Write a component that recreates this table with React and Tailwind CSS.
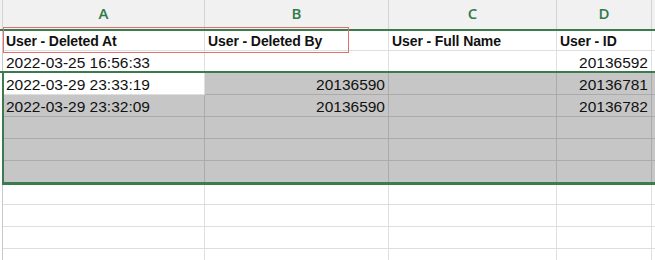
import React from "react";

const columns = [
  { key: "A", width: "w-[202px]", align: "left" },
  { key: "B", width: "w-[184px]", align: "right" },
  { key: "C", width: "w-[168px]", align: "left" },
  { key: "D", width: "w-[95px]", align: "right" },
];

const headers = ["User - Deleted At", "User - Deleted By", "User - Full Name", "User - ID"];

// each row: values for A..D, plus whether it sits inside the shaded range
const rows = [
  { cells: ["2022-03-25 16:56:33", "", "", "20136592"], shaded: false },
  { cells: ["2022-03-29 23:33:19", "20136590", "", "20136781"], shaded: true, activeFirst: true },
  { cells: ["2022-03-29 23:32:09", "20136590", "", "20136782"], shaded: true },
  { cells: ["", "", "", ""], shaded: true },
  { cells: ["", "", "", ""], shaded: true },
  { cells: ["", "", "", ""], shaded: true },
  { cells: ["", "", "", ""], shaded: false },
  { cells: ["", "", "", ""], shaded: false },
  { cells: ["", "", "", ""], shaded: false },
  { cells: ["", "", "", ""], shaded: false },
];

function Cell({ value, width, align, shaded, bold }) {
  return (
    <div
      className={`${width} shrink-0 h-full flex items-center px-[3px] border-r border-b ${
        shaded ? "bg-[#c6c6c6] border-[#ababab]" : "bg-white border-[#dedede]"
      } ${align === "right" ? "justify-end" : "justify-start"}`}
    >
      <span
        className={
          bold
            ? "text-[14px] font-bold tracking-[-0.1px] text-[#111] whitespace-nowrap pt-[4px]"
            : "text-[15.5px] text-[#111] whitespace-nowrap pt-[3px]"
        }
      >
        {value}
      </span>
    </div>
  );
}

function Row({ cells, shaded, activeFirst, bold }) {
  return (
    <div className="flex h-[22px]">
      <div className="w-[3px] shrink-0 h-full bg-white border-r border-[#c8c8c8]" />
      {columns.map((col, i) => (
        <Cell
          key={col.key}
          value={cells[i]}
          width={col.width}
          align={bold ? "left" : col.align}
          shaded={shaded && !(activeFirst && i === 0)}
          bold={bold}
        />
      ))}
      <div
        className={`flex-1 h-full border-b ${
          shaded ? "bg-[#c6c6c6] border-[#ababab]" : "bg-white border-[#dedede]"
        }`}
      />
    </div>
  );
}

export default function App() {
  return (
    <div
      className="relative w-[655px] h-[260px] overflow-hidden bg-white"
      style={{ fontFamily: '"Liberation Sans", Arial, sans-serif' }}
    >
      {/* column letters */}
      <div className="flex h-[29px] bg-[#f1f1f1]">
        <div className="w-[3px] shrink-0 border-r border-[#d4d4d4]" />
        {columns.map((col) => (
          <div
            key={col.key}
            className={`${col.width} shrink-0 flex items-center justify-center border-r border-[#d4d4d4] pb-[2px]`}
          >
            <span className="text-[15px] font-semibold text-[#2f7a49]" style={{ fontFamily: '"Open Sans", sans-serif' }}>
              {col.key}
            </span>
          </div>
        ))}
        <div className="flex-1" />
      </div>

      <div className="flex flex-col">
        <Row cells={headers} shaded={false} bold />
        {rows.map((r, i) => (
          <Row key={i} cells={r.cells} shaded={r.shaded} activeFirst={r.activeFirst} />
        ))}
      </div>

      {/* selection outlines */}
      <div className="absolute left-0 right-0 top-[29px] h-[2px] bg-[#3d7a4d]" />
      <div className="absolute left-0 right-0 top-[71px] h-[2px] bg-[#3d7a4d]" />
      <div className="absolute left-[2px] right-0 top-[71px] h-[114px] border-l-[2px] border-b-[3px] border-[#3d7a4d]" />
      <div className="absolute left-[3px] top-[27px] w-[346px] h-[26px] border border-[#e07070]" />
    </div>
  );
}
